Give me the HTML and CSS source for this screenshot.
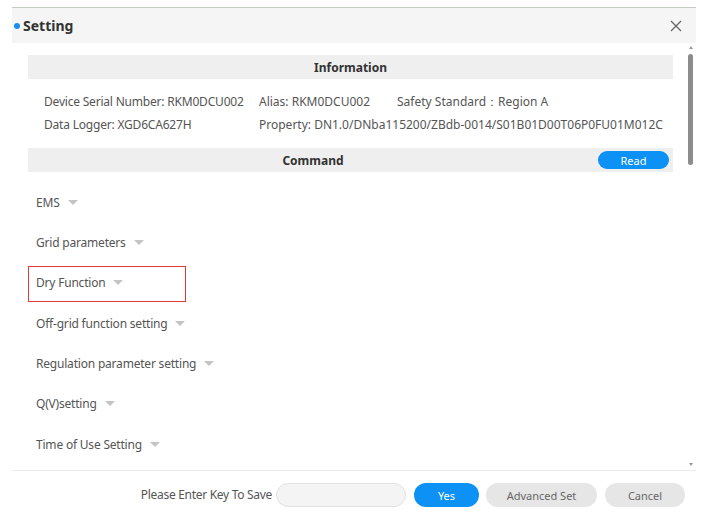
FILE: index.html
```html
<!DOCTYPE html>
<html>
<head>
<meta charset="utf-8">
<link rel="stylesheet" href="styles.css">
</head>
<body>
<div class="dialog">
  <div class="header">
    <span class="dot"></span>
    <span class="title">Setting</span>
    <span class="close">
      <svg width="12" height="12" viewBox="0 0 12 12"><path d="M1 1L11 11M11 1L1 11" stroke="#666" stroke-width="1.3" fill="none"/></svg>
    </span>
  </div>
  <div class="body">
    <div class="content">
      <div class="bar"><span class="bar-title">Information</span></div>
      <div class="info">
        <div class="info-row">
          <span class="c1">Device Serial Number: RKM0DCU002</span>
          <span class="c2">Alias: RKM0DCU002</span>
          <span class="c3">Safety Standard：Region A</span>
        </div>
        <div class="info-row">
          <span class="c1">Data Logger: XGD6CA627H</span>
          <span class="c2">Property: DN1.0/DNba115200/ZBdb-0014/S01B01D00T06P0FU01M012C</span>
        </div>
      </div>
      <div class="bar cmd"><span class="bar-title">Command</span><button class="read">Read</button></div>
      <ul class="menu">
        <li><span class="item">EMS<i class="caret"></i></span></li>
        <li><span class="item">Grid parameters<i class="caret"></i></span></li>
        <li><span class="item marked">Dry Function<i class="caret"></i></span></li>
        <li><span class="item">Off-grid function setting<i class="caret"></i></span></li>
        <li><span class="item">Regulation parameter setting<i class="caret"></i></span></li>
        <li><span class="item">Q(V)setting<i class="caret"></i></span></li>
        <li><span class="item">Time of Use Setting<i class="caret"></i></span></li>
      </ul>
    </div>
    <div class="scroll">
      <span class="arrow up"></span>
      <div class="track"><div class="thumb"></div></div>
      <span class="arrow down"></span>
    </div>
  </div>
  <div class="footer">
    <span class="label">Please Enter Key To Save</span>
    <input class="key" type="text">
    <button class="btn primary">Yes</button>
    <button class="btn adv">Advanced Set</button>
    <button class="btn cancel">Cancel</button>
  </div>
</div>
</body>
</html>
```
FILE: styles.css
```css
* { box-sizing: border-box; }
body {
  margin: 0;
  background: #fff;
  font-family: "Noto Sans", "Open Sans", sans-serif;
  color: #555;
}
.dialog {
  width: 684px;
  margin: 7px 0 0 12px;
  border-top: 1px solid #c3cbc2;
}
.header {
  height: 35px;
  background: #f5f5f5;
  display: flex;
  align-items: center;
  padding: 0 14px 0 2px;
}
.dot {
  width: 6px;
  height: 6px;
  border-radius: 50%;
  background: #1a8ff0;
  margin-right: 3px;
}
.title {
  font-weight: 700;
  font-size: 14px;
  color: #333;
  flex: 1;
}
.close { display: flex; }
.body {
  height: 427px;
  display: flex;
}
.content {
  flex: 1;
  padding: 12px 12px 0 16px;
  overflow: hidden;
}
.bar {
  height: 24px;
  background: #efefef;
  display: flex;
  align-items: center;
  justify-content: center;
}
.bar-title {
  font-weight: 700;
  font-size: 12px;
  color: #333;
}
.cmd { justify-content: flex-start; }
.cmd .bar-title { flex: 1; text-align: center; }
.read {
  width: 71px;
  height: 18px;
  margin-right: 4px;
  border: none;
  border-radius: 9px;
  background: #0d91f5;
  color: #fff;
  font-family: inherit;
  font-size: 11px;
  padding: 0;
}
.info {
  padding: 11px 0 12px 16px;
  font-size: 12px;
}
.info-row {
  display: flex;
  height: 23px;
  align-items: center;
  white-space: nowrap;
}
.c1 { width: 215px; letter-spacing: -0.2px; }
.c3 { margin-left: 27px; }
.menu {
  list-style: none;
  margin: 0;
  padding: 10px 0 0 0;
}
.menu li {
  height: 40.33px;
  display: flex;
  align-items: center;
}
.item {
  position: relative;
  font-size: 12px;
  color: #555;
  padding-left: 8px;
  display: inline-flex;
  align-items: center;
  letter-spacing: -0.2px;
}
.caret {
  display: inline-block;
  width: 0;
  height: 0;
  border-left: 5px solid transparent;
  border-right: 5px solid transparent;
  border-top: 5px solid #c4c4c4;
  margin-left: 8px;
}
.marked::after {
  content: "";
  position: absolute;
  left: 0;
  top: 50%;
  margin-top: -17px;
  width: 156px;
  height: 34px;
  border: 1.5px solid #e0393e;
}
.scroll {
  width: 11px;
  display: flex;
  flex-direction: column;
  align-items: center;
  padding: 3px 0 4px 0;
}
.arrow {
  width: 0;
  height: 0;
  border-left: 2.5px solid transparent;
  border-right: 2.5px solid transparent;
}
.arrow.up { border-bottom: 3px solid #999; }
.arrow.down { border-top: 3px solid #999; }
.track {
  flex: 1;
  width: 100%;
  display: flex;
  justify-content: center;
  padding-top: 5px;
}
.thumb {
  width: 5px;
  height: 111px;
  border-radius: 3px;
  background: #8c8c8c;
}
.footer {
  border-top: 1px solid #ececec;
  height: 54px;
  display: flex;
  align-items: flex-start;
  justify-content: flex-end;
  padding: 12px 11px 0 0;
  font-size: 12px;
}
.label {
  height: 24px;
  line-height: 24px;
  color: #555;
  margin-right: 4px;
  font-size: 12px;
  letter-spacing: -0.3px;
}
.key {
  width: 130px;
  height: 24px;
  border: 1px solid #e2e2e2;
  border-radius: 12px;
  background: #f4f4f4;
  margin-right: 8px;
  outline: none;
}
.btn {
  height: 24px;
  border: none;
  border-radius: 12px;
  font-family: inherit;
  font-size: 11px;
  padding: 0;
}
.primary {
  width: 65px;
  background: #0d91f5;
  color: #fff;
  margin-right: 7px;
}
.adv {
  width: 111px;
  background: #e6e6e6;
  color: #666;
  margin-right: 8px;
}
.cancel {
  width: 80px;
  background: #e6e6e6;
  color: #666;
}
```
